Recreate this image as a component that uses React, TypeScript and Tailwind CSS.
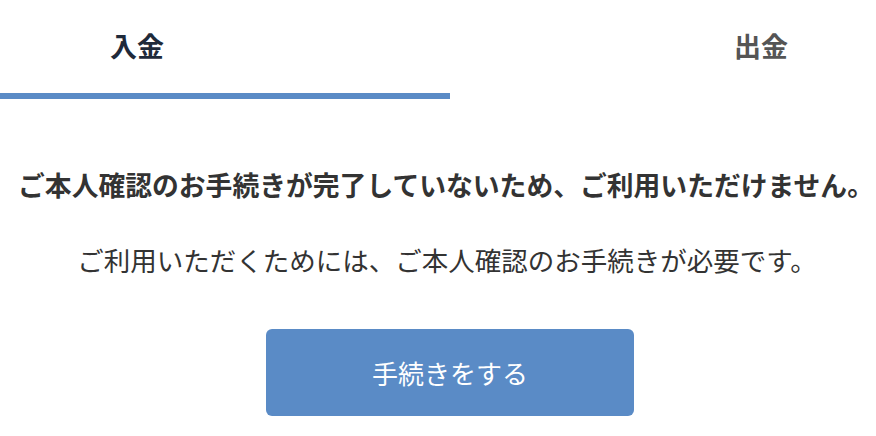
export default function App() {
  const font = { fontFamily: '"Noto Sans CJK JP", "Noto Sans", sans-serif' };
  return (
    <div className="w-[876px] h-[436px] bg-white overflow-hidden" style={font}>
      <div className="flex h-[93px] items-center">
        <div className="w-[274px] text-center text-[27px] font-bold text-[#1f2a3a]">入金</div>
        <div className="flex-1" />
        <div className="w-[54px] mr-[88px] text-center text-[27px] font-bold text-[#555555]">出金</div>
      </div>
      <div className="h-[6px] w-[450px] bg-[#5a8bc6]" />
      <div className="flex flex-col items-center">
        <p className="mt-[67px] ml-[16px] text-[26.8px] leading-[38px] font-bold text-[#333333] whitespace-nowrap">ご本人確認のお手続きが完了していないため、ご利用いただけません。</p>
        <p className="mt-[37px] ml-[18px] text-[26.5px] leading-[38px] text-[#333333] whitespace-nowrap">ご利用いただくためには、ご本人確認のお手続きが必要です。</p>
        <button className="mt-[50px] ml-[24px] w-[368px] h-[87px] rounded-[6px] bg-[#5a8bc6] text-white text-[26px]">手続きをする</button>
      </div>
    </div>
  );
}
